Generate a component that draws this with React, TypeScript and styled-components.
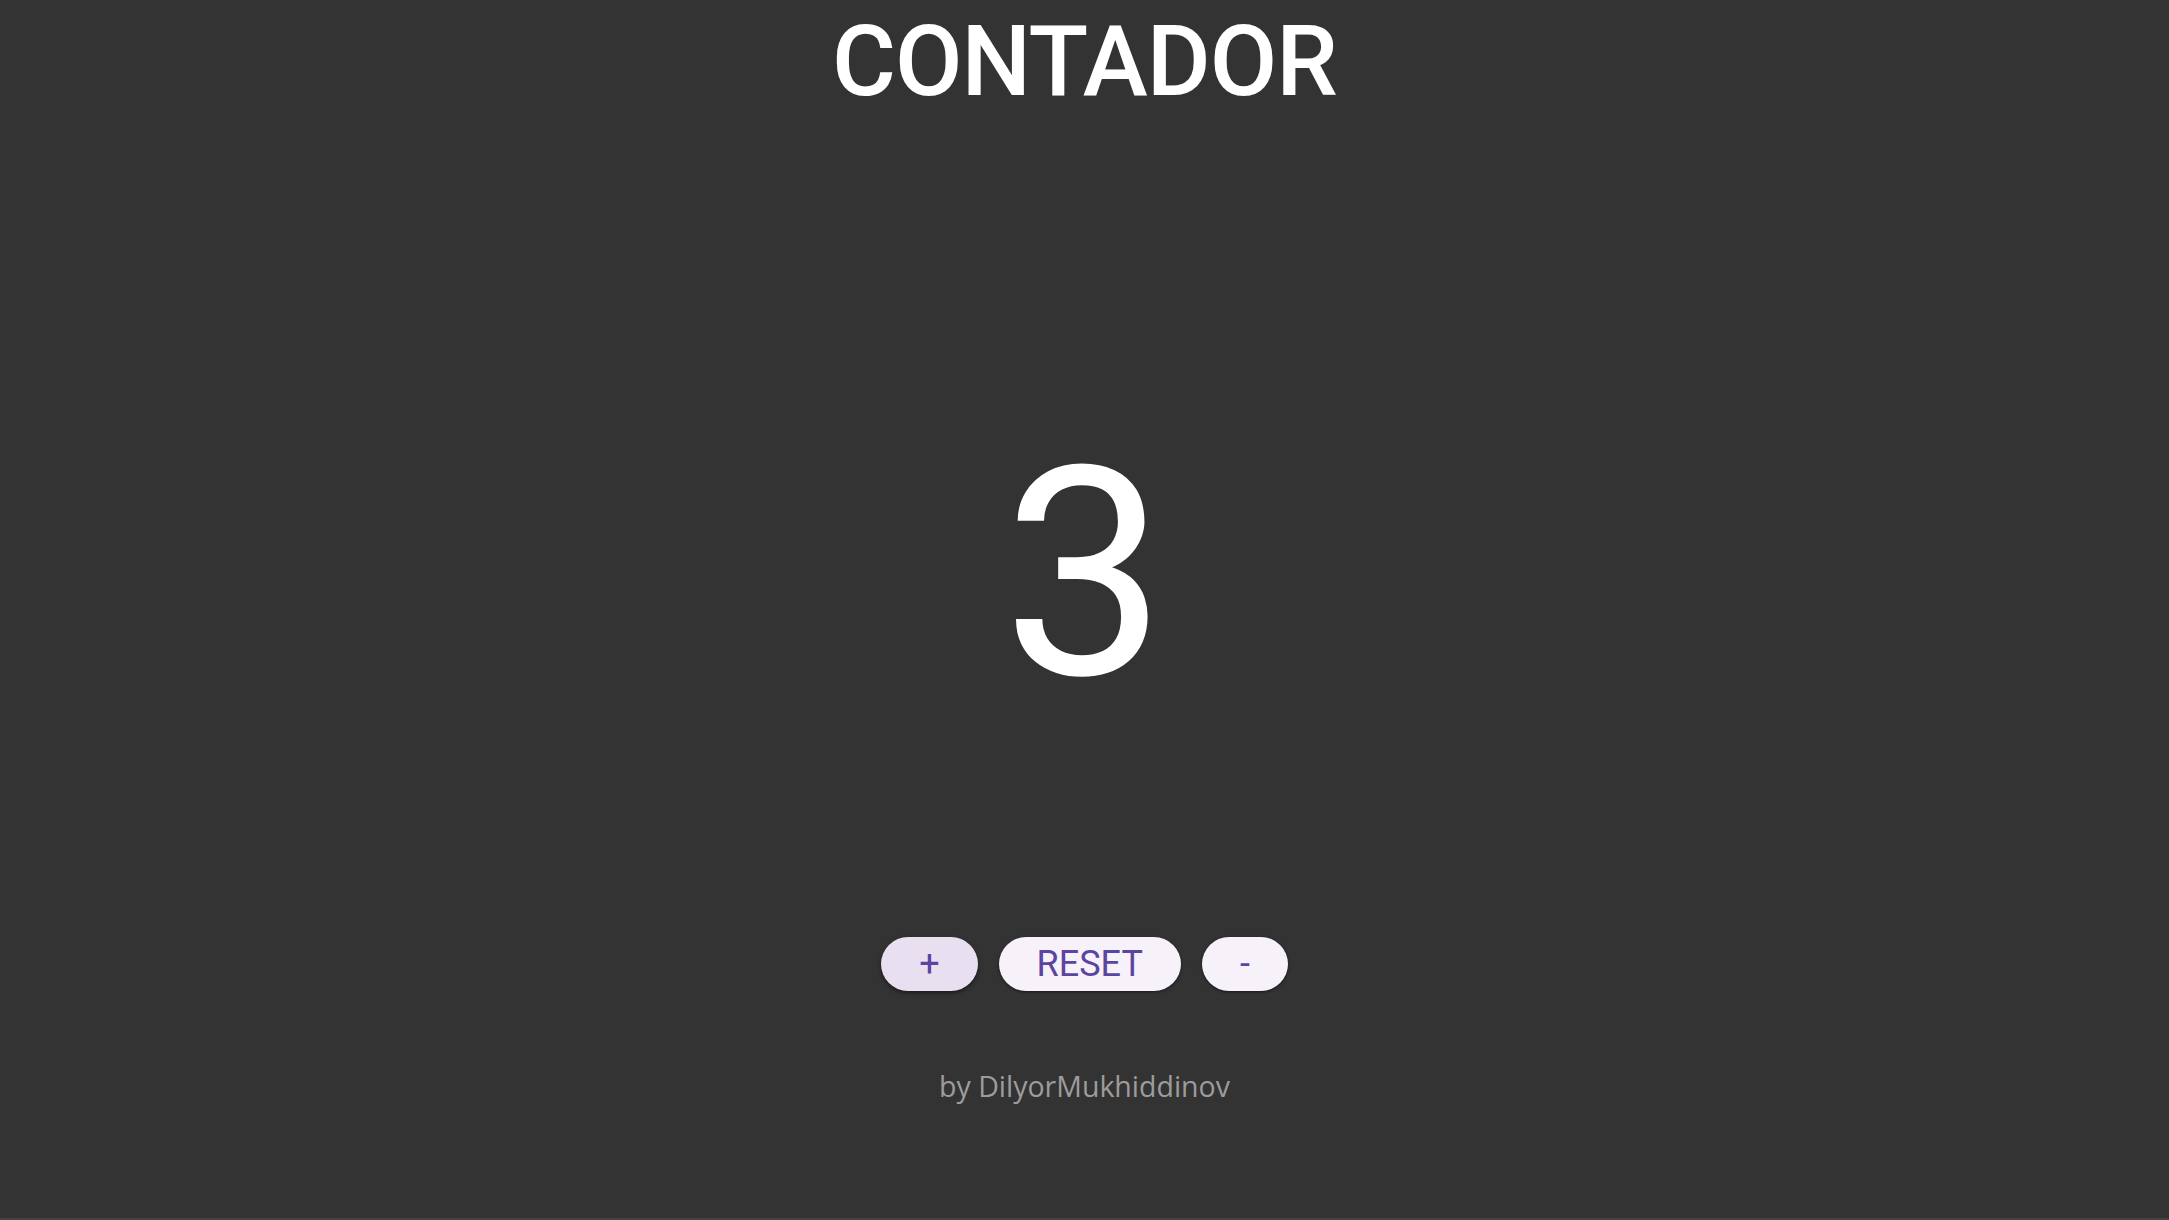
import React, { useState } from "react";
import styled, { createGlobalStyle } from "styled-components";

const GlobalStyle = createGlobalStyle`
  html, body {
    margin: 0;
    padding: 0;
    background: #333333;
  }
  #root {
    min-height: 100vh;
  }
`;

const Page = styled.main`
  box-sizing: border-box;
  height: 1220px;
  background: #333333;
  border-bottom: 2px solid #444444;
  display: flex;
  flex-direction: column;
  align-items: center;
  font-family: Roboto, "Liberation Sans", sans-serif;
`;

const Title = styled.h1`
  margin: 4px 0 0;
  font-family: Roboto, "Liberation Sans", sans-serif;
  font-weight: 500;
  font-size: 98px;
  line-height: 116px;
  color: #ffffff;
  letter-spacing: -1px;
`;

const Count = styled.div`
  margin-top: 283px;
  font-family: Roboto, "Liberation Sans", sans-serif;
  font-weight: 400;
  font-size: 292px;
  line-height: 342px;
  color: #ffffff;
`;

const ButtonRow = styled.div`
  margin-top: 192px;
  display: flex;
  align-items: center;
  gap: 21px;
`;

const PillButton = styled.button<{ $active?: boolean }>`
  height: 54px;
  padding: 0 38px;
  border: none;
  border-radius: 27px;
  background: ${(p) => (p.$active ? "#e8e0f0" : "#f7f2fa")};
  color: #5b45a0;
  font-family: Roboto, "Liberation Sans", sans-serif;
  font-size: 36px;
  font-weight: 400;
  line-height: 54px;
  cursor: pointer;
  box-shadow: ${(p) =>
    p.$active
      ? "0 2px 3px rgba(0,0,0,0.3), 0 2px 5px 1px rgba(0,0,0,0.15)"
      : "0 1px 2px rgba(0,0,0,0.35), 0 1px 3px 1px rgba(0,0,0,0.15)"};
`;

const Footer = styled.p`
  margin: 76px 0 0;
  font-family: "Open Sans", "Noto Sans", sans-serif;
  font-size: 28.5px;
  line-height: 38px;
  color: #9c9c9c;
`;

export default function App() {
  const [count, setCount] = useState(3);
  return (
    <>
      <GlobalStyle />
      <Page>
        <Title>CONTADOR</Title>
        <Count>{count}</Count>
        <ButtonRow>
          <PillButton $active onClick={() => setCount((c) => c + 1)}>
            +
          </PillButton>
          <PillButton onClick={() => setCount(0)}>RESET</PillButton>
          <PillButton onClick={() => setCount((c) => c - 1)}>-</PillButton>
        </ButtonRow>
        <Footer>by DilyorMukhiddinov</Footer>
      </Page>
    </>
  );
}
